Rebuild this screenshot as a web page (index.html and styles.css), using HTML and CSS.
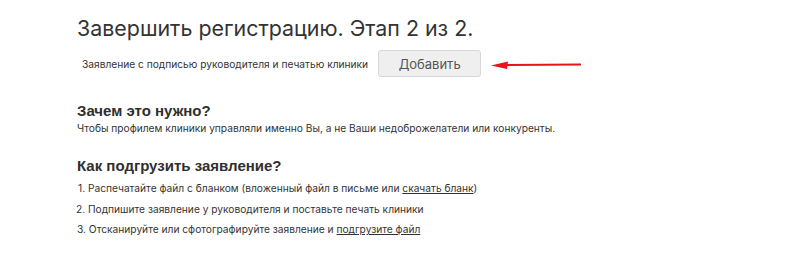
FILE: index.html
```html
<!DOCTYPE html>
<html lang="ru">
<head>
<meta charset="utf-8">
<link rel="stylesheet" href="styles.css">
</head>
<body>
<main class="page">
  <h1 class="title">Завершить регистрацию. Этап 2 из 2.</h1>
  <div class="upload-row">
    <span class="upload-label">Заявление с подписью руководителя и печатью клиники</span>
    <button class="btn">Добавить</button>
    <svg class="arrow" width="91" height="12" viewBox="0 0 91 12">
      <line x1="12" y1="6" x2="90" y2="5.5" stroke="#e8141c" stroke-width="2"/>
      <polygon points="0,6.5 17,2.5 16,10" fill="#e8141c"/>
    </svg>
  </div>
  <h2 class="subtitle why">Зачем это нужно?</h2>
  <p class="text">Чтобы профилем клиники управляли именно Вы, а не Ваши недоброжелатели или конкуренты.</p>
  <h2 class="subtitle how">Как подгрузить заявление?</h2>
  <ol class="steps">
    <li>1. Распечатайте файл с бланком (вложенный файл в письме или <a href="#">скачать бланк</a>)</li>
    <li>2. Подпишите заявление у руководителя и поставьте печать клиники</li>
    <li>3. Отсканируйте или сфотографируйте заявление и <a href="#">подгрузите файл</a></li>
  </ol>
</main>
</body>
</html>
```
FILE: styles.css
```css
html, body {
  margin: 0;
  padding: 0;
  background: #fff;
}
body {
  font-family: Inter, "Liberation Sans", Arial, sans-serif;
  color: #333;
}
.page {
  padding: 15px 0 0 77px;
}
.title {
  margin: 0;
  font-size: 21.4px;
  font-weight: 400;
  line-height: 26px;
  color: #333;
}
.upload-row {
  display: flex;
  align-items: center;
  margin-top: 9px;
  margin-left: 5px;
}
.upload-label {
  font-size: 10.2px;
  color: #333;
}
.btn {
  margin-left: 10px;
  width: 103px;
  height: 27px;
  font-family: inherit;
  font-size: 13px;
  color: #555;
  background: #efefef;
  border: 1px solid #d8d8d8;
  border-radius: 3px;
}
.arrow {
  margin-left: 10px;
  margin-top: 2px;
}
.subtitle {
  margin: 0;
  font-family: "Liberation Sans", Arial, sans-serif;
  font-size: 15px;
  font-weight: 700;
  line-height: 18px;
  color: #2f2f2f;
}
.why {
  margin-top: 25px;
}
.text {
  margin: 2.4px 0 0;
  font-size: 10.2px;
  line-height: 12px;
}
.how {
  margin-top: 22.6px;
}
.steps {
  list-style: none;
  margin: 7.4px 0 0;
  padding: 0 0 0 1px;
}
.steps li {
  font-size: 10.2px;
  line-height: 12px;
  margin-bottom: 8.5px;
}
.steps li:nth-child(2) {
  margin-left: -2px;
}
.steps li:nth-child(3) {
  margin-left: -1px;
}
.steps a {
  color: #333;
  text-decoration: underline;
}
```
